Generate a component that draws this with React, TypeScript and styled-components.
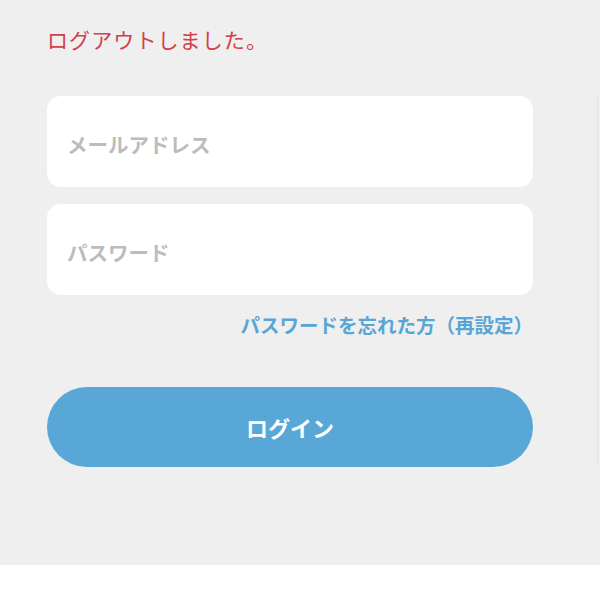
import styled, { createGlobalStyle } from 'styled-components'

const GlobalStyle = createGlobalStyle`
  html, body {
    margin: 0;
    padding: 0;
    background: #ffffff;
  }
  body {
    font-family: "Noto Sans CJK JP", "Noto Sans", sans-serif;
  }
`

export default function App() {
  return (
    <>
      <GlobalStyle />
      <Page>
        <Message>ログアウトしました。</Message>
        <FormArea>
          <Form onSubmit={(e) => e.preventDefault()}>
            <Field type='email' placeholder='メールアドレス' />
            <Field type='password' placeholder='パスワード' />
            <ForgotRow>
              <ForgotLink href='#'>パスワードを忘れた方（再設定）</ForgotLink>
            </ForgotRow>
            <LoginButton type='submit'>ログイン</LoginButton>
          </Form>
        </FormArea>
      </Page>
    </>
  )
}

const Page = styled.main`
  background: #efefef;
  height: 565px;
  padding: 24px 0 0 47px;
  box-sizing: border-box;
`

const Message = styled.p`
  margin: 0;
  color: #d2404b;
  font-size: 21px;
  letter-spacing: 1.1px;
  line-height: 30px;
  font-weight: 400;
`

const FormArea = styled.div`
  margin-top: 42px;
  width: 551px;
  border-right: 1px solid #e4e4e4;
  box-sizing: border-box;
`

const Form = styled.form`
  width: 486px;
  display: flex;
  flex-direction: column;
  gap: 17px;
`

const Field = styled.input`
  box-sizing: border-box;
  height: 91px;
  border: none;
  border-radius: 14px;
  background: #ffffff;
  padding: 5px 20px 0;
  font-family: inherit;
  font-size: 20.5px;
  font-weight: 700;
  color: #333;
  outline: none;

  &::placeholder {
    color: #bcbcbc;
  }
`

const ForgotRow = styled.div`
  display: flex;
  justify-content: flex-end;
  margin-top: -2px;
`

const ForgotLink = styled.a`
  color: #58a6d6;
  font-size: 19.5px;
  font-weight: 700;
  line-height: 30px;
  text-decoration: none;
`

const LoginButton = styled.button`
  margin-top: 30px;
  height: 80px;
  border: none;
  border-radius: 40px;
  background: #58a7d7;
  color: #ffffff;
  font-family: inherit;
  font-size: 22px;
  font-weight: 700;
  cursor: pointer;
`
